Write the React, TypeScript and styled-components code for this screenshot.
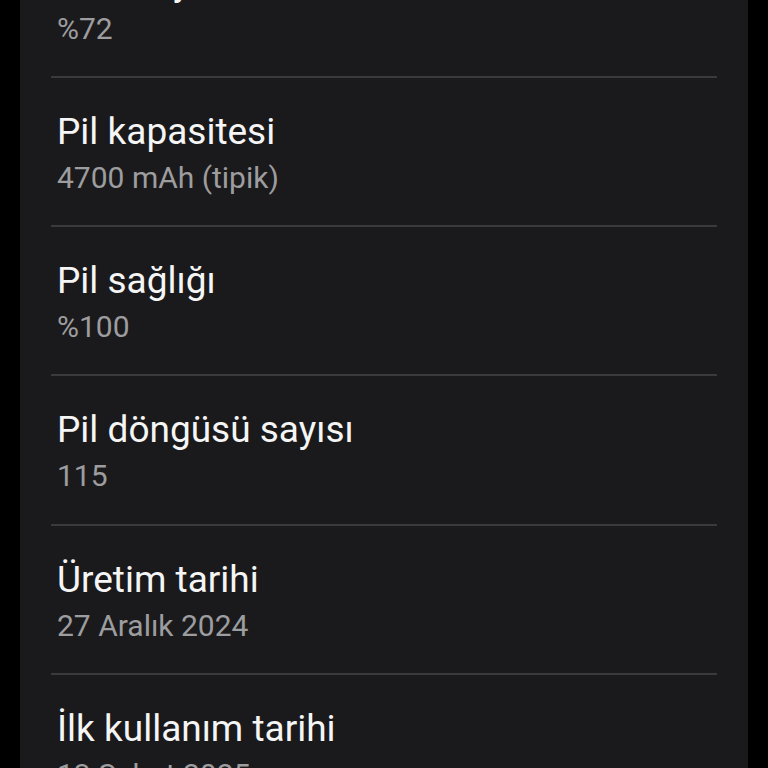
import styled, { createGlobalStyle } from "styled-components";

const GlobalStyle = createGlobalStyle`
    html, body {
        margin: 0;
        padding: 0;
        background: #000;
        overflow: hidden;
    }
    body {
        font-family: Roboto, "Noto Sans", sans-serif;
    }
`;

const Page = styled.div`
    height: 768px;
    overflow: hidden;
    padding: 0 20px;
`;

/* scrolled list: first row's title is above the fold */
const Card = styled.div`
    background: #1a1a1c;
    padding: 0 31px;
    margin-top: -71.5px;
    min-height: 1000px;
`;

const Item = styled.div`
    padding: 32px 6px 23.3px;
    & + & {
        border-top: 2px solid #3a3a3c;
    }
`;

const Title = styled.div`
    color: #f5f5f5;
    font-size: 37px;
    line-height: 44px;
    font-weight: 400;
`;

const Value = styled.div`
    color: #9d9d9f;
    font-size: 30px;
    line-height: 48px;
`;

const rows = [
    { title: "Pil seviyesi", value: "%72" },
    { title: "Pil kapasitesi", value: "4700 mAh (tipik)" },
    { title: "Pil sağlığı", value: "%100" },
    { title: "Pil döngüsü sayısı", value: "115" },
    { title: "Üretim tarihi", value: "27 Aralık 2024" },
    { title: "İlk kullanım tarihi", value: "13 Şubat 2025" },
];

export default function App() {
    return (
        <>
            <GlobalStyle />
            <Page>
                <Card>
                    {rows.map((r) => (
                        <Item key={r.title}>
                            <Title>{r.title}</Title>
                            <Value>{r.value}</Value>
                        </Item>
                    ))}
                </Card>
            </Page>
        </>
    );
}
